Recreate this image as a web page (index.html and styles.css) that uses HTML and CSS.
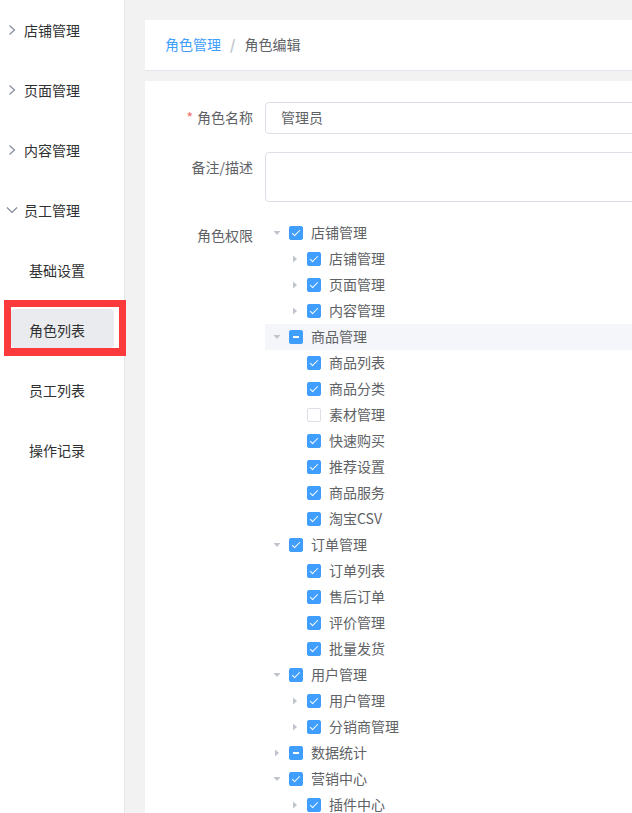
FILE: index.html
```html
<!DOCTYPE html>
<html lang="zh-CN">
<head>
<meta charset="utf-8">
<title>角色编辑</title>
<link rel="stylesheet" href="styles.css">
</head>
<body>
<div class="layout">
  <aside class="sidebar">
    <div class="menu-item"><svg class="chev" width="12" height="12" viewBox="0 0 12 12"><path d="M3.5 1.5 L8.5 6 L3.5 10.5" /></svg><span>店铺管理</span></div>
    <div class="menu-item"><svg class="chev" width="12" height="12" viewBox="0 0 12 12"><path d="M3.5 1.5 L8.5 6 L3.5 10.5" /></svg><span>页面管理</span></div>
    <div class="menu-item"><svg class="chev" width="12" height="12" viewBox="0 0 12 12"><path d="M3.5 1.5 L8.5 6 L3.5 10.5" /></svg><span>内容管理</span></div>
    <div class="menu-item"><svg class="chev" width="12" height="12" viewBox="0 0 12 12"><path d="M1 3.5 L6 8.5 L11 3.5" /></svg><span>员工管理</span></div>
    <div class="sub-item"><span class="sub-link">基础设置</span></div>
    <div class="sub-item active"><span class="sub-link">角色列表</span><span class="mark"></span></div>
    <div class="sub-item"><span class="sub-link">员工列表</span></div>
    <div class="sub-item"><span class="sub-link">操作记录</span></div>
  </aside>
  <main class="main">
    <div class="card crumb-card">
      <span class="crumb-link">角色管理</span><span class="crumb-sep">/</span><span class="crumb-cur">角色编辑</span>
    </div>
    <div class="card form-card">
      <div class="form-item">
        <label class="form-label"><span class="req">*</span>角色名称</label>
        <div class="form-content"><div class="input">管理员</div></div>
      </div>
      <div class="form-item">
        <label class="form-label">备注/描述</label>
        <div class="form-content"><div class="textarea"></div></div>
      </div>
      <div class="form-item">
        <label class="form-label">角色权限</label>
        <div class="form-content tree">
          <div class="node"><span class="caret"><svg width="8" height="8" viewBox="0 0 8 8"><path d="M0.5 2 L7.5 2 L4 6 Z"/></svg></span><span class="cb checked"></span><span class="nl">店铺管理</span></div>
          <div class="node l2"><span class="caret"><svg width="8" height="8" viewBox="0 0 8 8"><path d="M2 0.5 L6 4 L2 7.5 Z"/></svg></span><span class="cb checked"></span><span class="nl">店铺管理</span></div>
          <div class="node l2"><span class="caret"><svg width="8" height="8" viewBox="0 0 8 8"><path d="M2 0.5 L6 4 L2 7.5 Z"/></svg></span><span class="cb checked"></span><span class="nl">页面管理</span></div>
          <div class="node l2"><span class="caret"><svg width="8" height="8" viewBox="0 0 8 8"><path d="M2 0.5 L6 4 L2 7.5 Z"/></svg></span><span class="cb checked"></span><span class="nl">内容管理</span></div>
          <div class="node current"><span class="caret"><svg width="8" height="8" viewBox="0 0 8 8"><path d="M0.5 2 L7.5 2 L4 6 Z"/></svg></span><span class="cb half"></span><span class="nl">商品管理</span></div>
          <div class="node l2"><span class="caret leaf"></span><span class="cb checked"></span><span class="nl">商品列表</span></div>
          <div class="node l2"><span class="caret leaf"></span><span class="cb checked"></span><span class="nl">商品分类</span></div>
          <div class="node l2"><span class="caret leaf"></span><span class="cb"></span><span class="nl">素材管理</span></div>
          <div class="node l2"><span class="caret leaf"></span><span class="cb checked"></span><span class="nl">快速购买</span></div>
          <div class="node l2"><span class="caret leaf"></span><span class="cb checked"></span><span class="nl">推荐设置</span></div>
          <div class="node l2"><span class="caret leaf"></span><span class="cb checked"></span><span class="nl">商品服务</span></div>
          <div class="node l2"><span class="caret leaf"></span><span class="cb checked"></span><span class="nl">淘宝CSV</span></div>
          <div class="node"><span class="caret"><svg width="8" height="8" viewBox="0 0 8 8"><path d="M0.5 2 L7.5 2 L4 6 Z"/></svg></span><span class="cb checked"></span><span class="nl">订单管理</span></div>
          <div class="node l2"><span class="caret leaf"></span><span class="cb checked"></span><span class="nl">订单列表</span></div>
          <div class="node l2"><span class="caret leaf"></span><span class="cb checked"></span><span class="nl">售后订单</span></div>
          <div class="node l2"><span class="caret leaf"></span><span class="cb checked"></span><span class="nl">评价管理</span></div>
          <div class="node l2"><span class="caret leaf"></span><span class="cb checked"></span><span class="nl">批量发货</span></div>
          <div class="node"><span class="caret"><svg width="8" height="8" viewBox="0 0 8 8"><path d="M0.5 2 L7.5 2 L4 6 Z"/></svg></span><span class="cb checked"></span><span class="nl">用户管理</span></div>
          <div class="node l2"><span class="caret"><svg width="8" height="8" viewBox="0 0 8 8"><path d="M2 0.5 L6 4 L2 7.5 Z"/></svg></span><span class="cb checked"></span><span class="nl">用户管理</span></div>
          <div class="node l2"><span class="caret"><svg width="8" height="8" viewBox="0 0 8 8"><path d="M2 0.5 L6 4 L2 7.5 Z"/></svg></span><span class="cb checked"></span><span class="nl">分销商管理</span></div>
          <div class="node"><span class="caret"><svg width="8" height="8" viewBox="0 0 8 8"><path d="M2 0.5 L6 4 L2 7.5 Z"/></svg></span><span class="cb half"></span><span class="nl">数据统计</span></div>
          <div class="node"><span class="caret"><svg width="8" height="8" viewBox="0 0 8 8"><path d="M0.5 2 L7.5 2 L4 6 Z"/></svg></span><span class="cb checked"></span><span class="nl">营销中心</span></div>
          <div class="node l2"><span class="caret"><svg width="8" height="8" viewBox="0 0 8 8"><path d="M2 0.5 L6 4 L2 7.5 Z"/></svg></span><span class="cb checked"></span><span class="nl">插件中心</span></div>
        </div>
      </div>
    </div>
  </main>
</div>
</body>
</html>
```

FILE: styles.css
```css
html, body {
  margin: 0;
  padding: 0;
  height: 100%;
  overflow: hidden;
}
body {
  font-family: "Noto Sans CJK SC", "Noto Sans", sans-serif;
  font-size: 14px;
  color: #606266;
  background: #f2f2f2;
}
.layout {
  display: flex;
  min-height: 100vh;
}
.sidebar {
  width: 124px;
  flex: 0 0 124px;
  background: #fff;
  border-right: 1px solid #e6e6e6;
}
.menu-item {
  height: 60px;
  display: flex;
  align-items: center;
  padding-left: 6px;
  padding-bottom: 1px;
  box-sizing: border-box;
  color: #303133;
}
.chev {
  margin-right: 6px;
  fill: none;
  stroke: #7d8799;
  stroke-width: 1.1;
}
.sub-item {
  position: relative;
  height: 60px;
  display: flex;
  align-items: center;
  padding: 0 10px 0 11px;
  color: #303133;
}
.sub-link {
  flex: 1;
  height: 39px;
  display: flex;
  align-items: center;
  padding-left: 18px;
  border-radius: 4px;
}
.sub-item.active .sub-link {
  background: #eaebef;
  margin-top: -3px;
  padding-top: 3px;
  height: 36px;
}
.mark {
  position: absolute;
  left: 4px;
  top: 0;
  width: 108px;
  height: 41px;
  border: 7px solid #fb3b3b;
  border-bottom-width: 8px;
  pointer-events: none;
}
.main {
  flex: 1;
  padding: 20px 0 0 20px;
  min-width: 0;
}
.card {
  background: #fff;
  margin-right: -60px;
}
.crumb-card {
  height: 48px;
  padding-bottom: 2px;
  display: flex;
  align-items: center;
  padding-left: 20px;
  border-bottom: 1px solid #e4e7ed;
  margin-bottom: 10px;
}
.crumb-link {
  color: #409eff;
}
.crumb-sep {
  margin: 0 9px;
  color: #c0c4cc;
  font-weight: 700;
}
.crumb-cur {
  color: #606266;
}
.form-card {
  padding: 21px 0 0 20px;
  min-height: 800px;
}
.form-item {
  display: flex;
  margin-bottom: 18px;
}
.form-label {
  width: 100px;
  flex: 0 0 100px;
  box-sizing: border-box;
  padding-right: 12px;
  padding-bottom: 2px;
  text-align: right;
  line-height: 30px;
  color: #606266;
}
.req {
  color: #f56c6c;
  margin-right: 4px;
}
.form-content {
  flex: 1;
  min-width: 0;
}
.input {
  height: 32px;
  box-sizing: border-box;
  border: 1px solid #dcdfe6;
  border-radius: 4px;
  padding: 0 15px 2px;
  line-height: 28px;
  color: #606266;
}
.textarea {
  height: 50px;
  box-sizing: border-box;
  border: 1px solid #dcdfe6;
  border-radius: 4px;
}
.node {
  height: 26px;
  display: flex;
  align-items: center;
  color: #606266;
}
.node.l2 {
  padding-left: 18px;
}
.node.current {
  background: #f5f6fa;
}
.caret {
  width: 24px;
  height: 26px;
  flex: 0 0 24px;
  display: flex;
  align-items: center;
  justify-content: center;
  fill: #c0c4cc;
}
.cb {
  position: relative;
  width: 14px;
  height: 14px;
  flex: 0 0 14px;
  box-sizing: border-box;
  border: 1px solid #dcdfe6;
  border-radius: 2px;
  background: #fff;
  margin-right: 8px;
}
.cb.checked, .cb.half {
  background: #409eff;
  border-color: #409eff;
}
.cb.checked::after {
  content: "";
  position: absolute;
  left: 4px;
  top: 1px;
  width: 3px;
  height: 7px;
  border: 1px solid #fff;
  border-left: 0;
  border-top: 0;
  transform: rotate(45deg);
}
.cb.half::before {
  content: "";
  position: absolute;
  left: 3px;
  right: 3px;
  top: 5px;
  height: 2px;
  background: #fff;
}
.nl {
  line-height: 24px;
  padding-bottom: 2px;
}
```
